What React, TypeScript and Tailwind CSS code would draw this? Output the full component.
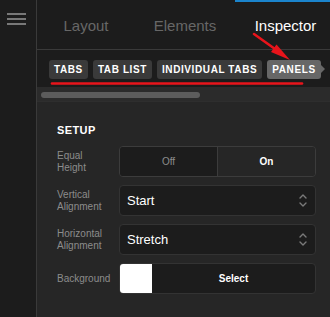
import { ReactNode } from "react";

const font = { fontFamily: '"Liberation Sans", Arial, sans-serif' };

function Chip({ children, active }: { children: ReactNode; active?: boolean }) {
  return (
    <div
      className={`relative flex h-[19px] items-center rounded-[3px] px-[5px] text-[10px] font-bold tracking-[0.6px] text-white ${
        active ? "bg-[#676767]" : "bg-[#3a3a3a]"
      }`}
    >
      {children}
      {active && (
        <span className="absolute right-[-4px] top-1/2 h-0 w-0 -translate-y-1/2 border-y-[4px] border-l-[4px] border-y-transparent border-l-[#676767]" />
      )}
    </div>
  );
}

function Row({ label, children }: { label: ReactNode; children: ReactNode }) {
  return (
    <div className="flex h-[31px] items-center">
      <div className="w-[62px] text-[10px] leading-[12px] text-[#8c8c8c]">{label}</div>
      <div className="h-full flex-1">{children}</div>
    </div>
  );
}

function Chevrons() {
  return (
    <svg width="8" height="15" viewBox="0 0 8 15" fill="none" stroke="#7a7a7a" strokeWidth="1.4" strokeLinecap="round" strokeLinejoin="round">
      <path d="M1 5 L4 2 L7 5" />
      <path d="M1 10 L4 13 L7 10" />
    </svg>
  );
}

function SelectBox({ value }: { value: string }) {
  return (
    <div className="flex h-full items-center justify-between rounded-[4px] border border-[#333333] bg-[#1c1c1c] pl-[7px] pr-[8px]">
      <span className="text-[13px] text-white">{value}</span>
      <Chevrons />
    </div>
  );
}

export default function App() {
  return (
    <div className="relative flex h-[317px] w-[330px] overflow-hidden bg-[#1c1c1c]" style={font}>
      {/* sidebar */}
      <div className="w-[37px] shrink-0 border-r border-[#3a3a3a] bg-[#1c1c1c] pl-[7px] pt-[13px]">
        <div className="flex w-[19px] flex-col gap-[3px]">
          <span className="h-[2px] bg-[#787878]" />
          <span className="h-[2px] bg-[#787878]" />
          <span className="h-[2px] bg-[#787878]" />
        </div>
      </div>

      <div className="flex flex-1 flex-col">
        {/* top tabs */}
        <div className="flex h-[50px] border-b border-[#3a3a3a] pt-[3px] text-[15px]">
          <div className="flex w-[98px] items-center justify-center text-[#676767]">Layout</div>
          <div className="flex w-[100px] items-center justify-center text-[#676767]">Elements</div>
          <div className="relative flex flex-1 items-center justify-center pl-[6px] text-white">
            <span className="absolute left-0 right-0 top-[-3px] h-[2px] bg-[#1b84cc]" />
            Inspector
          </div>
        </div>

        {/* chips */}
        <div className="flex h-[37px] items-center gap-[5px] pl-[12px] pt-[1px]">
          <Chip>TABS</Chip>
          <Chip>TAB LIST</Chip>
          <Chip>INDIVIDUAL TABS</Chip>
          <Chip active>PANELS</Chip>
        </div>

        {/* scroll track */}
        <div className="h-[15px] border-b border-[#2e2e2e] bg-[#2b2b2b] pl-[4px] pt-[5px]">
          <div className="h-[6px] w-[159px] rounded-full bg-[#5c5c5c]" />
        </div>

        {/* panel */}
        <div className="flex-1 bg-[#262626] pl-[20px] pr-[14px] pt-[22px]">
          <div className="mb-[10px] text-[11px] font-bold leading-[12px] tracking-[0.4px] text-white">SETUP</div>
          <div className="flex flex-col gap-[8px]">
            <Row label={<>Equal<br />Height</>}>
              <div className="flex h-full overflow-hidden rounded-[4px] border border-[#3c3c3c]">
                <div className="flex flex-1 items-center justify-center border-r border-[#3c3c3c] bg-[#1c1c1c] text-[10px] text-[#8c8c8c]">Off</div>
                <div className="flex flex-1 items-center justify-center bg-[#262626] text-[10px] font-bold text-white">On</div>
              </div>
            </Row>
            <Row label={<>Vertical<br />Alignment</>}>
              <SelectBox value="Start" />
            </Row>
            <Row label={<>Horizontal<br />Alignment</>}>
              <SelectBox value="Stretch" />
            </Row>
            <Row label="Background">
              <div className="flex h-full overflow-hidden rounded-[4px] border border-[#333333] bg-[#1c1c1c]">
                <div className="w-[32px] bg-white" />
                <div className="flex flex-1 items-center justify-center text-[10px] font-bold text-white">Select</div>
              </div>
            </Row>
          </div>
        </div>
      </div>

      {/* red annotations */}
      <svg className="pointer-events-none absolute left-0 top-0" width="330" height="317">
        <line x1="52" y1="83.5" x2="302" y2="83.5" stroke="#e8141b" strokeWidth="2.6" strokeLinecap="round" />
        <line x1="254" y1="34" x2="275" y2="49" stroke="#e8141b" strokeWidth="2.6" strokeLinecap="round" />
        <polygon points="290,60 271,52 276.5,44.5" fill="#e8141b" />
      </svg>
    </div>
  );
}
